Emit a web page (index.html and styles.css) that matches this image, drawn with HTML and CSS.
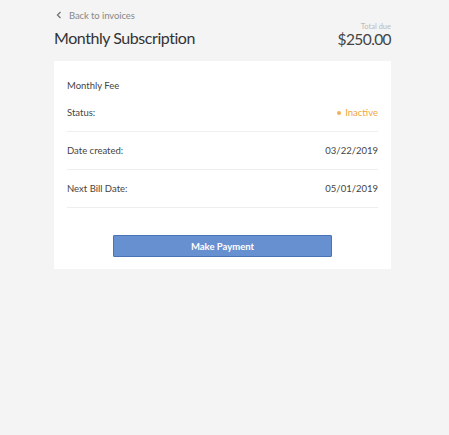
FILE: index.html
```html
<!DOCTYPE html>
<html>
<head>
<meta charset="utf-8">
<link rel="stylesheet" href="styles.css">
</head>
<body>
<div class="page">
  <a class="back" href="#">
    <svg class="chev" width="6" height="8" viewBox="0 0 6 8"><path d="M4.5 1 L1.5 4 L4.5 7" fill="none" stroke="#777" stroke-width="1.4"/></svg>
    <span>Back to invoices</span>
  </a>
  <div class="header">
    <h1 class="title">Monthly Subscription</h1>
    <div class="total">
      <div class="total-label">Total due</div>
      <div class="total-amount">$250.00</div>
    </div>
  </div>
  <div class="card">
    <div class="fee">Monthly Fee</div>
    <div class="row">
      <span>Status:</span>
      <span class="status"><span class="dot"></span>Inactive</span>
    </div>
    <div class="row">
      <span>Date created:</span>
      <span>03/22/2019</span>
    </div>
    <div class="row">
      <span>Next Bill Date:</span>
      <span>05/01/2019</span>
    </div>
    <div class="actions">
      <button class="pay">Make Payment</button>
    </div>
  </div>
</div>
</body>
</html>
```
FILE: styles.css
```css
html, body {
  margin: 0;
  padding: 0;
  background: #f4f4f4;
  font-family: "Lato", "Open Sans", sans-serif;
  color: #444;
}
.page {
  width: 337px;
  margin-left: 54px;
  padding-top: 9px;
}
.back {
  display: flex;
  align-items: center;
  gap: 7px;
  padding-left: 2px;
  height: 12px;
  font-size: 9.5px;
  letter-spacing: -0.1px;
  color: #888;
  text-decoration: none;
}
.header {
  display: flex;
  justify-content: space-between;
  align-items: flex-end;
  height: 32px;
}
.title {
  margin: 0;
  font-size: 16px;
  font-weight: 400;
  letter-spacing: -0.45px;
  color: #333;
  line-height: 22px;
  padding-bottom: 4px;
}
.total {
  text-align: right;
  padding-bottom: 5px;
}
.total-label {
  font-size: 7.5px;
  color: #bbb;
  line-height: 9px;
}
.total-amount {
  font-size: 15.5px;
  letter-spacing: -0.6px;
  color: #444;
  line-height: 17px;
}
.card {
  margin-top: 8px;
  background: #fff;
  padding: 17px 13px 12px;
}
.fee {
  font-size: 9.5px;
  line-height: 16px;
  color: #444;
}
.row {
  display: flex;
  justify-content: space-between;
  align-items: center;
  height: 37px;
  border-bottom: 1px solid #eee;
  font-size: 9.5px;
  color: #444;
}
.status {
  color: #f0a640;
  display: flex;
  align-items: center;
  gap: 4px;
}
.dot {
  width: 4px;
  height: 4px;
  border-radius: 50%;
  background: #f3b05a;
}
.actions {
  display: flex;
  justify-content: center;
  padding-top: 27px;
}
.pay {
  width: 219px;
  height: 22px;
  background: #6790d0;
  border: 1px solid #4a73b5;
  border-radius: 1px;
  color: #fff;
  font-family: inherit;
  font-size: 9.5px;
  font-weight: 700;
  padding: 0;
}
```
